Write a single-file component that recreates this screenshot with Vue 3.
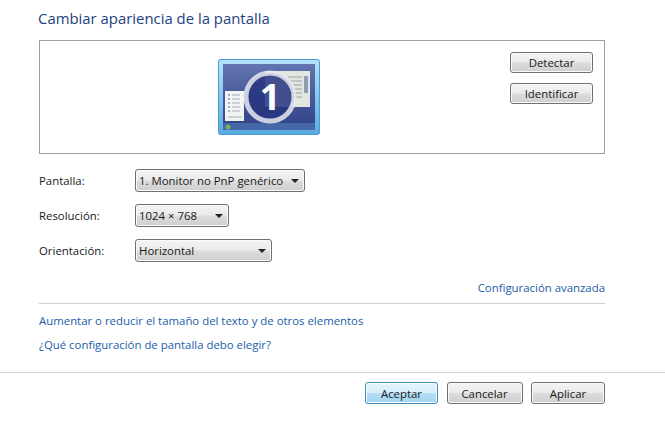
<script setup>
const rows = [
  { label: 'Pantalla:', value: '1. Monitor no PnP genérico', width: 170 },
  { label: 'Resolución:', value: '1024 × 768', width: 94 },
  { label: 'Orientación:', value: 'Horizontal', width: 137 }
];
const footerButtons = [
  { text: 'Aceptar', width: 73, primary: true },
  { text: 'Cancelar', width: 76 },
  { text: 'Aplicar', width: 74 }
];
</script>

<template>
  <div class="page">
    <div class="content">
      <h1 class="title">Cambiar apariencia de la pantalla</h1>

      <div class="preview">
        <svg class="monitor" width="102" height="76" viewBox="0 0 102 76">
          <defs>
            <linearGradient id="frame" x1="0" y1="0" x2="0" y2="1">
              <stop offset="0" stop-color="#b5e2f9" />
              <stop offset="1" stop-color="#5aaae0" />
            </linearGradient>
            <linearGradient id="desk" x1="0" y1="0" x2="0" y2="1">
              <stop offset="0" stop-color="#6275b0" />
              <stop offset="1" stop-color="#2f3f86" />
            </linearGradient>
            <filter id="soft" x="-5%" y="-5%" width="110%" height="110%">
              <feGaussianBlur stdDeviation="0.35" />
            </filter>
          </defs>
          <rect x="0.5" y="0.5" width="101" height="75" rx="2" fill="url(#frame)" stroke="#4a9bd4" />
          <g filter="url(#soft)">
            <rect x="5" y="5" width="92" height="66" fill="url(#desk)" />
            <rect x="47" y="12" width="45" height="36" fill="#e4e6e2" />
            <rect x="86" y="17" width="4" height="17" fill="#8f9db4" />
            <path stroke="#9aa0a6" d="M70 18h14M70 22h14M70 26h14M70 30h14M70 34h14M70 38h14" />
            <rect x="7" y="32" width="19" height="30" fill="#f2f3f3" />
            <path stroke="#667" d="M10 36h2M10 40h2M10 44h2M10 48h2M10 52h2" />
            <path stroke="#aab" d="M14 36h8M14 40h8M14 44h8M14 48h8M14 52h8M10 58h14" />
            <rect x="5" y="64" width="92" height="7" fill="#4668a8" />
            <circle cx="10" cy="68" r="2.5" fill="#7fb050" />
            <circle cx="52" cy="38" r="24" fill="#27347f" fill-opacity="0.85" stroke="#e6e9f0" stroke-opacity="0.85" stroke-width="5" />
          </g>
          <text class="digit" x="52" y="51" text-anchor="middle">1</text>
        </svg>
        <div class="side-buttons">
          <button class="btn side">Detectar</button>
          <button class="btn side">Identificar</button>
        </div>
      </div>

      <div class="rows">
        <div v-for="row in rows" :key="row.label" class="row">
          <span class="label">{{ row.label }}</span>
          <div class="select" :style="{ width: row.width + 'px' }">
            <span>{{ row.value }}</span>
            <i class="arrow"></i>
          </div>
        </div>
      </div>

      <div class="advanced"><a class="link">Configuración avanzada</a></div>
      <div class="sep"></div>
      <a class="link block first">Aumentar o reducir el tamaño del texto y de otros elementos</a>
      <a class="link block">¿Qué configuración de pantalla debo elegir?</a>
    </div>

    <div class="footer">
      <button
        v-for="b in footerButtons"
        :key="b.text"
        class="btn"
        :class="{ primary: b.primary }"
        :style="{ width: b.width + 'px' }"
      >{{ b.text }}</button>
    </div>
  </div>
</template>

<style>
html, body { margin: 0; background: #fff; }
</style>

<style scoped>
.page {
  position: relative;
  width: 665px;
  height: 429px;
  overflow: hidden;
  background: #fff;
  font-family: "Open Sans", "Liberation Sans", sans-serif;
  font-size: 11.4px;
  color: #1a1a1a;
}
.content {
  width: 566px;
  padding: 9px 0 0 39px;
}
.title {
  margin: 0 0 0 -1px;
  height: 31px;
  line-height: 18px;
  font-size: 14.9px;
  font-weight: 400;
  color: #1d3f80;
}
.preview {
  position: relative;
  box-sizing: border-box;
  height: 114px;
  border: 1px solid #a0a0a0;
  display: flex;
  justify-content: flex-end;
  padding: 11px 11px 0 0;
}
.monitor {
  position: absolute;
  left: 178px;
  top: 18px;
}
.digit {
  font-family: "Open Sans", "Liberation Sans", sans-serif;
  font-size: 36px;
  font-weight: 700;
  fill: #fff;
}
.side-buttons {
  display: flex;
  flex-direction: column;
  gap: 10px;
}
.btn {
  box-sizing: border-box;
  height: 21px;
  padding: 0;
  border: 1px solid #707070;
  border-radius: 3px;
  background: linear-gradient(#f4f4f4 0, #ebebeb 48%, #dcdcdc 52%, #cfcfcf 100%);
  box-shadow: inset 0 0 0 1px #fbfbfb;
  font: inherit;
  color: #1a1a1a;
  text-align: center;
}
.side {
  width: 83px;
}
.primary {
  border-color: #3c8dbc;
  background: linear-gradient(#e6f5fc 0, #d6eefb 48%, #b4dff6 52%, #a3d5f0 100%);
}
.rows {
  margin-top: 15px;
  display: flex;
  flex-direction: column;
  gap: 12px;
}
.row {
  display: flex;
  align-items: center;
  height: 23px;
}
.label {
  width: 96px;
  margin-top: -1px;
}
.select {
  box-sizing: border-box;
  height: 23px;
  display: flex;
  align-items: center;
  justify-content: space-between;
  padding: 0 5px 0 3px;
  border: 1px solid #707070;
  border-radius: 3px;
  background: linear-gradient(#f4f4f4 0, #ebebeb 48%, #dcdcdc 52%, #cfcfcf 100%);
  box-shadow: inset 0 0 0 1px #fbfbfb;
}
.arrow {
  width: 0;
  height: 0;
  border-left: 4px solid transparent;
  border-right: 4px solid transparent;
  border-top: 4px solid #222;
}
.advanced {
  margin-top: 18px;
  text-align: right;
  line-height: 16px;
}
.link {
  color: #1b5da8;
}
.sep {
  margin-top: 7px;
  height: 1px;
  background: #d0d0d0;
}
.block {
  display: block;
  line-height: 16px;
  margin-top: 8px;
}
.first {
  margin-top: 9px;
}
.footer {
  position: absolute;
  top: 372px;
  left: 0;
  box-sizing: border-box;
  width: 665px;
  height: 57px;
  border-top: 1px solid #d0d0d0;
  display: flex;
  justify-content: flex-end;
  gap: 8.5px;
  padding: 9px 60px 0 0;
}
.footer .btn {
  height: 22px;
}
</style>
